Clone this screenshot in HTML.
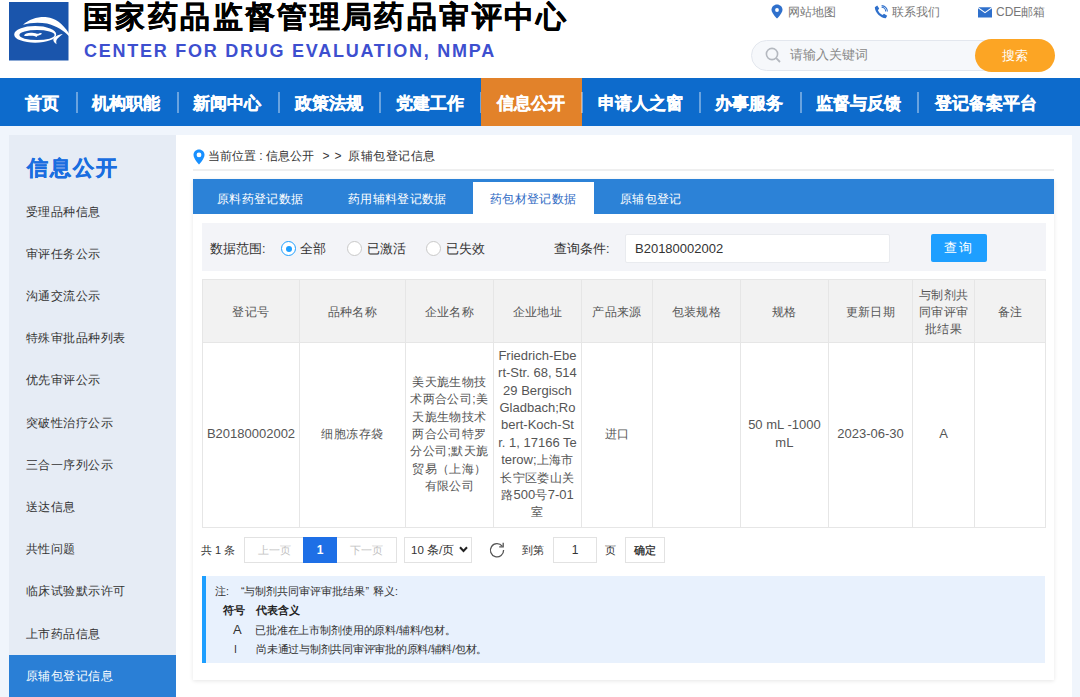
<!DOCTYPE html>
<html><head><meta charset="utf-8">
<style>
*{box-sizing:border-box;margin:0;padding:0}
html,body{width:1080px;height:697px;overflow:hidden;background:#f0f5fc;font-family:"Liberation Sans",sans-serif;color:#333}
.a{position:absolute;white-space:nowrap}
#hdr{position:absolute;left:0;top:0;width:1080px;height:78px;background:#fff}
#nav{position:absolute;left:0;top:78px;width:1080px;height:48px;background:#0d6bcc}
#nav .it{position:absolute;top:1.5px;height:48px;line-height:48px;color:#fff;font-size:17px;font-weight:bold;white-space:nowrap;-webkit-text-stroke:0.35px #fff}
#nav .sep{position:absolute;top:14px;width:2px;height:20.5px;background:rgba(255,255,255,0.38)}
#side{position:absolute;left:9px;top:135px;width:167px;height:562px;background:#e6ecf5}
#side .t{position:absolute;left:17.5px;top:18.5px;font-size:21px;letter-spacing:2px;font-weight:bold;color:#1a6ee0;-webkit-text-stroke:0.4px #1a6ee0}
#side .i{position:absolute;left:0;width:167px;height:42.2px;line-height:42.2px;padding-left:17px;font-size:12px;letter-spacing:0.45px;color:#333;white-space:nowrap}
#side .i.on{background:#2a7fd6;color:#fff}
#panel{position:absolute;left:176px;top:135px;width:896px;height:562px;background:#fff}
#inner{position:absolute;left:193px;top:179px;width:861px;height:501px;background:#fff;box-shadow:0 1px 4px rgba(0,0,0,0.10)}

.tab{top:191px;font-size:12px;line-height:16px;letter-spacing:0.35px}
.bc{top:148px;font-size:12px;line-height:16px;color:#333}
.lbl{top:241px;font-size:12.5px;line-height:16px;color:#333}
.radio{top:241px;width:15px;height:15px;border:1px solid #c9c9c9;border-radius:50%;background:#fff}
.radio.on{border-color:#1e9fff}
.radio.on:after{content:"";position:absolute;left:3.5px;top:3.5px;width:6px;height:6px;border-radius:50%;background:#1e9fff}

.hl{height:1px;background:#e6e6e6}
.vl{width:1px;background:#e6e6e6}
.cell{display:flex;align-items:center;justify-content:center;text-align:center;line-height:17.4px;font-size:13px;color:#555}
.hd{font-size:12px;letter-spacing:0.4px;color:#555;padding-top:3.5px}
.bd{color:#555;font-size:12px;letter-spacing:0.4px}
.l{font-size:13px;letter-spacing:0;line-height:1}

.note{font-size:10.5px;line-height:16px;color:#333}
</style></head>
<body>
<div id="hdr">
  <svg class="a" style="left:9px;top:2px" width="60" height="59" viewBox="0 0 60 59">
    <rect x="0" y="0" width="59.5" height="58.5" fill="#1a55ac"/>
    <path d="M14 22.8C20 17 30 14.4 38 15.2C48 16.2 57 24 64.5 39.5C58 31 50 24.8 38 21.6C30 20 21 20.6 14 22.8Z" fill="#fff"/>
    <path fill-rule="evenodd" d="M5.2 32.4A21 8.4 0 1 0 47.2 32.4A21 8.4 0 1 0 5.2 32.4ZM10.4 33.1A17.6 5 0 1 0 45.6 33.1A17.6 5 0 1 0 10.4 33.1Z" fill="#fff"/>
    <path d="M53.8 32C49 32.6 45 34.8 44.3 37.5C44.2 39.5 45.8 41 47.6 42.2C47 40 47 38 48.6 36.5C50 35 52 33.5 53.8 32Z" fill="#fff"/>
    <path d="M15 33.5C16 31.5 19 30.5 23 30.8C26 31 28 32 29.5 31.8C30.5 30.8 32 30.5 33 31.5C32 33 30 33.3 28.5 33.8L27.5 35C26 33.8 23 33.5 20 33.8C18 34 16 34.5 15 33.5Z" fill="#fff"/>
  </svg>
  <svg class="a" style="left:771px;top:4px" width="12" height="15" viewBox="0 0 12 15"><path d="M6 0.4C3 0.4 0.5 2.8 0.5 5.8 0.5 9.3 6 14.6 6 14.6S11.5 9.3 11.5 5.8C11.5 2.8 9 0.4 6 0.4Z" fill="#2f70cc"/><circle cx="6" cy="6" r="1.9" fill="#fff"/></svg>
  <svg class="a" style="left:874px;top:5px" width="14" height="14" viewBox="0 0 14 14"><path d="M3.2 0.6L5.2 3.6 3.9 5.2C4.6 7 6.4 8.9 8.5 10L10 8.7 13.2 10.8 11.8 13.3C6.5 13 1 7.5 0.8 2.2Z" fill="#2f70cc"/><path d="M7.6 2.3A4.2 4.2 0 0 1 11.7 6.4M7.6 0.6A5.9 5.9 0 0 1 13.4 6.4" stroke="#2f70cc" stroke-width="1.1" fill="none"/></svg>
  <svg class="a" style="left:978px;top:7px" width="14" height="11" viewBox="0 0 14 11"><path d="M0 1.2L7 6.2 14 1.2V10.6H0Z" fill="#2f70cc"/><path d="M0.3 0.3H13.7L7 5Z" fill="#2f70cc"/></svg>
  
  <div class="a" style="left:83px;top:-1px;font-size:30px;font-weight:bold;color:#000;line-height:36px;letter-spacing:2.38px;-webkit-text-stroke:0.3px #000">国家药品监督管理局药品审评中心</div>
  <div class="a" style="left:84px;top:39px;font-size:18px;font-weight:bold;color:#3d4fcf;letter-spacing:1.75px;line-height:24px">CENTER FOR DRUG EVALUATION, NMPA</div>
  <div class="a" style="left:788px;top:4px;font-size:12px;color:#777;line-height:16px">网站地图</div>
  <div class="a" style="left:892px;top:4px;font-size:12px;color:#777;line-height:16px">联系我们</div>
  <div class="a" style="left:996px;top:4px;font-size:12px;color:#777;line-height:16px">CDE邮箱</div>
  <div class="a" style="left:751px;top:40px;width:290px;height:31px;border:1px solid #e3e7ee;border-radius:16px;background:#f6f8fb"></div>
  <svg class="a" style="left:765px;top:47px" width="17" height="17" viewBox="0 0 17 17"><circle cx="7" cy="7" r="5.6" stroke="#b4b8bf" stroke-width="1.6" fill="none"/><path d="M11.2 11.2L15 15" stroke="#b4b8bf" stroke-width="1.8"/></svg>
  <div class="a" style="left:790px;top:47px;font-size:13px;color:#888;line-height:16px">请输入关键词</div>
  <div class="a" style="left:975px;top:39px;width:80px;height:33px;border-radius:17px;background:#fca524;color:#fff;font-size:13px;line-height:33px;text-align:center">搜索</div>
</div>
<div id="nav">
  <div class="it" style="left:25px">首页</div><div class="sep" style="left:75.5px"></div>
  <div class="it" style="left:92px">机构职能</div><div class="sep" style="left:176.5px"></div>
  <div class="it" style="left:193px">新闻中心</div><div class="sep" style="left:277.5px"></div>
  <div class="it" style="left:295px">政策法规</div><div class="sep" style="left:378.5px"></div>
  <div class="it" style="left:396px">党建工作</div><div class="sep" style="left:479.5px"></div>
  <div class="a" style="left:481px;top:0;width:101px;height:48px;background:#e2822a"></div>
  <div class="it" style="left:497px">信息公开</div><div class="sep" style="left:580.5px"></div>
  <div class="it" style="left:598px">申请人之窗</div><div class="sep" style="left:698.5px"></div>
  <div class="it" style="left:715px">办事服务</div><div class="sep" style="left:799.5px"></div>
  <div class="it" style="left:816px">监督与反馈</div><div class="sep" style="left:916.5px"></div>
  <div class="it" style="left:935px">登记备案平台</div>
</div>
<div id="side">
  <div class="t">信息公开</div>
  <div class="i" style="top:55.6px">受理品种信息</div>
  <div class="i" style="top:97.8px">审评任务公示</div>
  <div class="i" style="top:140px">沟通交流公示</div>
  <div class="i" style="top:182.2px">特殊审批品种列表</div>
  <div class="i" style="top:224.4px">优先审评公示</div>
  <div class="i" style="top:266.6px">突破性治疗公示</div>
  <div class="i" style="top:308.8px">三合一序列公示</div>
  <div class="i" style="top:351px">送达信息</div>
  <div class="i" style="top:393.2px">共性问题</div>
  <div class="i" style="top:435.4px">临床试验默示许可</div>
  <div class="i" style="top:477.6px">上市药品信息</div>
  <div class="i on" style="top:519.8px">原辅包登记信息</div>
</div>

<div id="panel"></div>
<div id="inner"></div>
<svg class="a" style="left:193px;top:149px" width="12" height="16" viewBox="0 0 12 16"><path d="M6 0.5C2.9 0.5 0.5 2.9 0.5 5.9 0.5 9.6 6 15.5 6 15.5S11.5 9.6 11.5 5.9C11.5 2.9 9.1 0.5 6 0.5Z" fill="#1890ff"/><circle cx="6" cy="5.9" r="2.4" fill="#fff"/></svg>
<div class="a bc" style="left:208px">当前位置 : 信息公开</div><div class="a bc" style="left:322.5px">&gt;</div><div class="a bc" style="left:334.5px">&gt;</div><div class="a bc" style="left:348px;letter-spacing:0.5px">原辅包登记信息</div>
<div class="a" style="left:193px;top:169px;width:861px;height:2px;background:#efefef"></div>
<div class="a" id="tabs" style="left:193px;top:179px;width:861px;height:35px;background:#2c82d7"></div>
<div class="a" style="left:473px;top:182px;width:121px;height:32px;background:#fff"></div>
<div class="a tab" style="left:217px;color:#fff">原料药登记数据</div>
<div class="a tab" style="left:348px;color:#fff">药用辅料登记数据</div>
<div class="a tab" style="left:490px;color:#2f6bc4">药包材登记数据</div>
<div class="a tab" style="left:620px;color:#fff">原辅包登记</div>
<div class="a" style="left:202px;top:223px;width:844px;height:48px;background:#f3f4f8"></div>
<div class="a lbl" style="left:210px">数据范围:</div>
<div class="a radio on" style="left:281px"></div><div class="a lbl" style="left:300px">全部</div>
<div class="a radio" style="left:347px"></div><div class="a lbl" style="left:367px">已激活</div>
<div class="a radio" style="left:426px"></div><div class="a lbl" style="left:446px">已失效</div>
<div class="a lbl" style="left:554px">查询条件:</div>
<div class="a" style="left:625px;top:234px;width:265px;height:29px;background:#fff;border:1px solid #e9ebef;border-radius:2px"></div>
<div class="a" style="left:635px;top:241px;font-size:13px;line-height:16px;color:#333"><span class="l">B20180002002</span></div>
<div class="a" style="left:931px;top:234px;width:56px;height:28px;background:#1e9fff;border-radius:2px;color:#fff;font-size:13px;line-height:28px;text-align:center;letter-spacing:2px">查询</div>

<div class="a" style="left:202.5px;top:279.5px;width:843px;height:63px;background:#f2f2f2"></div>
<div class="a hl" style="left:202.5px;top:279.0px;width:843.9px"></div>
<div class="a hl" style="left:202.5px;top:342.0px;width:843.9px"></div>
<div class="a hl" style="left:202.5px;top:526.5px;width:843.9px"></div>
<div class="a vl" style="left:202.0px;top:279px;height:248.5px"></div>
<div class="a vl" style="left:299.0px;top:279px;height:248.5px"></div>
<div class="a vl" style="left:404.7px;top:279px;height:248.5px"></div>
<div class="a vl" style="left:493.0px;top:279px;height:248.5px"></div>
<div class="a vl" style="left:580.9px;top:279px;height:248.5px"></div>
<div class="a vl" style="left:652.2px;top:279px;height:248.5px"></div>
<div class="a vl" style="left:739.8px;top:279px;height:248.5px"></div>
<div class="a vl" style="left:828.0px;top:279px;height:248.5px"></div>
<div class="a vl" style="left:912.0px;top:279px;height:248.5px"></div>
<div class="a vl" style="left:974.1px;top:279px;height:248.5px"></div>
<div class="a vl" style="left:1044.9px;top:279px;height:248.5px"></div>
<div class="a cell hd" style="left:202.5px;top:279.5px;width:97.0px;height:63px">登记号</div>
<div class="a cell bd" style="left:202.5px;top:342.5px;width:97.0px;height:184.5px"><div><span class="l">B20180002002</span></div></div>
<div class="a cell hd" style="left:299.5px;top:279.5px;width:105.69999999999999px;height:63px">品种名称</div>
<div class="a cell bd" style="left:299.5px;top:342.5px;width:105.69999999999999px;height:184.5px"><div>细胞冻存袋</div></div>
<div class="a cell hd" style="left:405.2px;top:279.5px;width:88.30000000000001px;height:63px">企业名称</div>
<div class="a cell bd" style="left:405.2px;top:342.5px;width:88.30000000000001px;height:184.5px"><div>美天旎生物技<br>术两合公司;美<br>天旎生物技术<br>两合公司特罗<br>分公司;默天旎<br>贸易（上海）<br>有限公司</div></div>
<div class="a cell hd" style="left:493.5px;top:279.5px;width:87.89999999999998px;height:63px">企业地址</div>
<div class="a cell bd" style="left:493.5px;top:342.5px;width:87.89999999999998px;height:184.5px"><div><span class="l">Friedrich-Ebe<br>rt-Str. 68, 514<br>29 Bergisch<br>Gladbach;Ro<br>bert-Koch-St<br>r. 1, 17166 Te<br>terow;</span>上海市<br>长宁区娄山关<br>路<span class="l">500</span>号<span class="l">7-01</span><br>室</div></div>
<div class="a cell hd" style="left:581.4px;top:279.5px;width:71.30000000000007px;height:63px">产品来源</div>
<div class="a cell bd" style="left:581.4px;top:342.5px;width:71.30000000000007px;height:184.5px"><div>进口</div></div>
<div class="a cell hd" style="left:652.7px;top:279.5px;width:87.59999999999991px;height:63px">包装规格</div>
<div class="a cell hd" style="left:740.3px;top:279.5px;width:88.20000000000005px;height:63px">规格</div>
<div class="a cell bd" style="left:740.3px;top:342.5px;width:88.20000000000005px;height:184.5px"><div><span class="l">50 mL -1000<br>mL</span></div></div>
<div class="a cell hd" style="left:828.5px;top:279.5px;width:84.0px;height:63px">更新日期</div>
<div class="a cell bd" style="left:828.5px;top:342.5px;width:84.0px;height:184.5px"><div><span class="l">2023-06-30</span></div></div>
<div class="a cell hd" style="left:912.5px;top:279.5px;width:62.10000000000002px;height:63px">与制剂共<br>同审评审<br>批结果</div>
<div class="a cell bd" style="left:912.5px;top:342.5px;width:62.10000000000002px;height:184.5px"><div><span class="l">A</span></div></div>
<div class="a cell hd" style="left:974.6px;top:279.5px;width:70.80000000000007px;height:63px">备注</div>

<div class="a" style="left:201px;top:542px;font-size:11px;line-height:16px;color:#333">共 1 条</div>
<div class="a" style="left:244px;top:537px;width:153px;height:26px;border:1px solid #e2e2e2;background:#fff"></div>
<div class="a" style="left:303px;top:537px;width:34px;height:26px;background:#1e6fe6;color:#fff;font-size:12px;font-weight:bold;line-height:26px;text-align:center">1</div>
<div class="a" style="left:258px;top:542px;font-size:11px;line-height:16px;color:#c2c2c2">上一页</div>
<div class="a" style="left:350px;top:542px;font-size:11px;line-height:16px;color:#c2c2c2">下一页</div>
<div class="a" style="left:404px;top:537px;width:68px;height:26px;border:1px solid #e2e2e2;background:#fff"></div>
<div class="a" style="left:411px;top:542px;font-size:11.5px;line-height:16px;color:#333">10 条/页</div>
<svg class="a" style="left:459px;top:546px" width="9" height="7" viewBox="0 0 9 7"><path d="M1 1.2L4.5 5 8 1.2" stroke="#222" stroke-width="2" fill="none"/></svg>
<svg class="a" style="left:488px;top:541px" width="18" height="18" viewBox="0 0 18 18"><path d="M14.2 5.2A6.6 6.6 0 1 0 15.6 9" stroke="#555" stroke-width="1.3" fill="none"/><path d="M15.2 1.8V5.8H11.2" stroke="#555" stroke-width="1.3" fill="none"/></svg>
<div class="a" style="left:522px;top:542px;font-size:11px;line-height:16px;color:#333">到第</div>
<div class="a" style="left:553px;top:537px;width:44px;height:26px;border:1px solid #e2e2e2;background:#fff;font-size:12px;line-height:24px;text-align:center;color:#333">1</div>
<div class="a" style="left:605px;top:542px;font-size:11px;line-height:16px;color:#333">页</div>
<div class="a" style="left:625px;top:537px;width:40px;height:26px;border:1px solid #e2e2e2;background:#fff;font-size:11px;line-height:24px;text-align:center;color:#222;-webkit-text-stroke:0.25px #222">确定</div>
<div class="a" style="left:202px;top:576px;width:843px;height:87px;background:#e8f1fd;border-left:4px solid #1e9fff"></div>
<div class="a note" style="left:215px;top:583px">注:</div><div class="a note" style="left:241px;top:583px">“与制剂共同审评审批结果”</div><div class="a note" style="left:373px;top:583px">释义:</div>
<div class="a note" style="left:223px;top:602px;font-weight:bold;color:#222">符号</div>
<div class="a note" style="left:256px;top:602px;font-weight:bold;color:#222">代表含义</div>
<div class="a note" style="left:233px;top:622px"><span class="l">A</span></div>
<div class="a note" style="left:255px;top:622px;letter-spacing:-0.15px">已批准在上市制剂使用的原料/辅料/包材。</div>
<div class="a note" style="left:234px;top:641px">I</div>
<div class="a note" style="left:256px;top:641px;letter-spacing:-0.25px">尚未通过与制剂共同审评审批的原料/辅料/包材。</div>

</body></html>
